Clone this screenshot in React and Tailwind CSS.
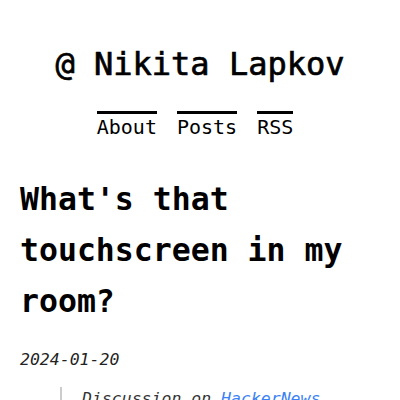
export default function App() {
  return (
    <div className="min-h-[400px] bg-white px-5 text-black" style={{ fontFamily: '"DejaVu Sans Mono", "Liberation Mono", monospace' }}>
      <header className="flex flex-col items-center pt-[40px]">
        <h1 className="text-[32px] leading-[48px] font-normal [-webkit-text-stroke:0.7px_black]">@ Nikita Lapkov</h1>
        <nav className="mt-[23px] flex gap-5 pr-[10px] text-[20px] leading-[26px]">
          <a className="border-t-[3px] border-black">About</a>
          <a className="border-t-[3px] border-black">Posts</a>
          <a className="border-t-[3px] border-black">RSS</a>
        </nav>
      </header>
      <main className="mt-[34px]">
        <h2 className="text-[31.5px] font-bold leading-[51px]">What's that touchscreen in my room?</h2>
        <p className="mt-[21px] text-[16.5px] italic text-[#222]">2024-01-20</p>
        <blockquote className="mt-[14px] ml-10 border-l-2 border-[#ccc] pl-5 text-[16.5px] italic text-[#333]">
          Discussion on <a className="text-[#3b82f6] underline">HackerNews</a>
        </blockquote>
      </main>
    </div>
  );
}
